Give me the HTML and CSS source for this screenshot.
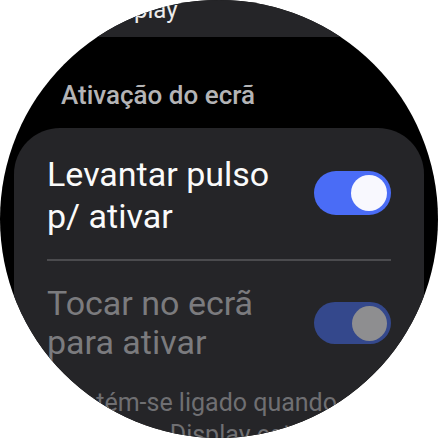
FILE: index.html
```html
<!DOCTYPE html>
<html lang="pt">
  <head>
    <meta charset="UTF-8" />
    <title>Ativação do ecrã</title>
    <link rel="stylesheet" href="styles.css">
  </head>
  <body>
    <div class="watch">
      <div class="scroll">
        <!-- previous item, scrolled mostly out of view -->
        <div class="card top">
          <div class="top-text">Always On<br>Display</div>
        </div>

        <h2 class="header">Ativação do ecrã</h2>

        <div class="card main">
          <div class="row">
            <div class="label">Levantar pulso p/ ativar</div>
            <div class="toggle on"><span class="knob"></span></div>
          </div>
          <div class="divider"></div>
          <div class="row dim">
            <div class="label">Tocar no ecrã para ativar</div>
            <div class="toggle on"><span class="knob"></span></div>
          </div>
          <div class="desc">Mantém-se ligado quando o<br>Always On Display está ativo.</div>
        </div>
      </div>
    </div>
  </body>
</html>
```

FILE: styles.css
```css
body {
  margin: 0;
  background: #fff;
  font-family: Roboto, "Noto Sans", sans-serif;
}
.watch {
  width: 438px;
  height: 438px;
  border-radius: 50%;
  overflow: hidden;
  background: #000;
}
.card {
  margin: 0 14px;
  background: #252528;
  border-radius: 46px;
}
.top {
  height: 100px;
  margin-top: -63px;
  display: flex;
  flex-direction: column;
  justify-content: flex-end;
  padding: 0 0 13px 86px;
  box-sizing: border-box;
}
.top-text {
  font-size: 24px;
  line-height: 28px;
  color: #ececec;
}
.header {
  margin: 42px 0 17px;
  padding-left: 61px;
  font-size: 26px;
  line-height: 32px;
  font-weight: 500;
  color: #b4b4b6;
}
.main {
  padding: 25px 33px 0;
  height: 340px;
  box-sizing: border-box;
}
.row {
  display: flex;
  align-items: center;
  gap: 20px;
  padding-bottom: 22px;
}
.label {
  flex: 1;
  font-size: 34px;
  line-height: 42px;
  color: #fafafa;
}
.toggle {
  width: 77px;
  height: 44px;
  border-radius: 22px;
  background: #4a6cf6;
  display: flex;
  align-items: center;
  justify-content: flex-end;
  padding: 0 4px;
  box-sizing: border-box;
  margin-top: -4px;
}
.knob {
  width: 36px;
  height: 36px;
  border-radius: 50%;
  background: #f8f8fe;
}
.divider {
  height: 2px;
  background: #4b4b4e;
}
.row.dim {
  padding: 23px 0 0;
}
.dim .label {
  line-height: 39px;
  color: #7b7b7e;
}
.dim .toggle {
  height: 42px;
  background: #34488c;
  margin-top: 0;
}
.dim .knob {
  width: 35px;
  height: 35px;
  background: #8e8e90;
}
.desc {
  margin: 25px -40px 0 0;
  font-size: 25px;
  line-height: 32px;
  white-space: nowrap;
  color: #6f6f72;
}
```
